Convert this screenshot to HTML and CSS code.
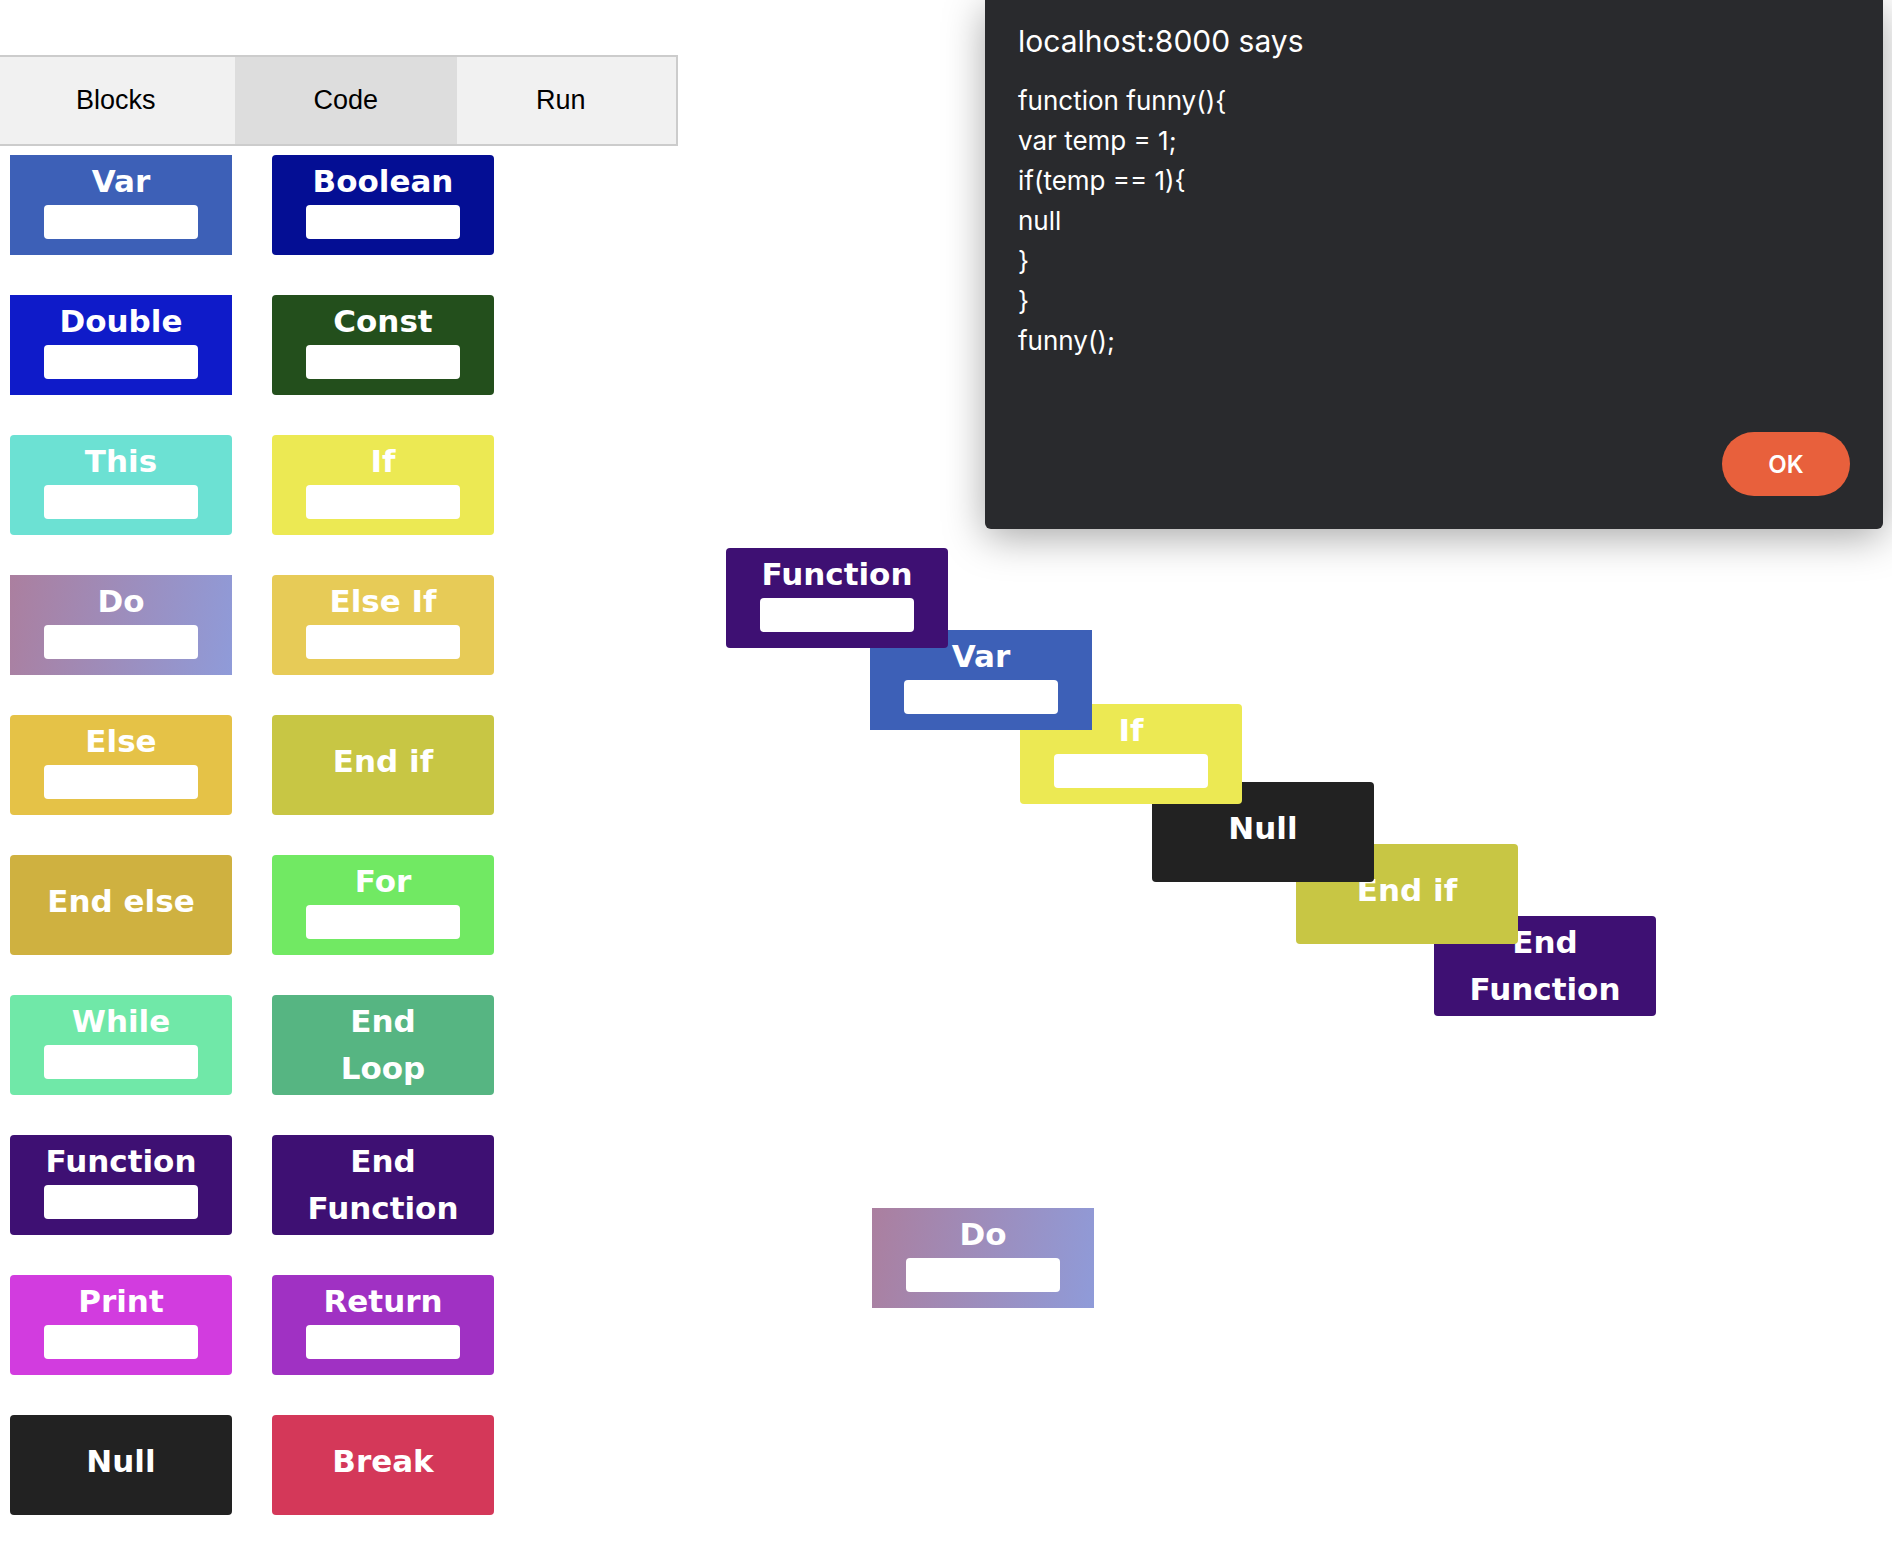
FILE: index.html
```html
<!DOCTYPE html>
<html lang="en">
<head>
<meta charset="utf-8">
<meta name="viewport" content="width=device-width, initial-scale=1">
<title>Block editor</title>
<link rel="stylesheet" href="styles.css">
</head>
<body>
<nav class="tabs">
  <button class="tab" type="button">Blocks</button>
  <button class="tab tab-active" type="button">Code</button>
  <button class="tab" type="button">Run</button>
</nav>

<main class="workspace">
  <section class="palette">
    <label class="block square var"><span class="name">Var</span><input class="value" type="text"></label>
    <label class="block boolean"><span class="name">Boolean</span><input class="value" type="text"></label>
    <label class="block square double"><span class="name">Double</span><input class="value" type="text"></label>
    <label class="block const"><span class="name">Const</span><input class="value" type="text"></label>
    <label class="block this"><span class="name">This</span><input class="value" type="text"></label>
    <label class="block if"><span class="name">If</span><input class="value" type="text"></label>
    <label class="block square do"><span class="name">Do</span><input class="value" type="text"></label>
    <label class="block else-if"><span class="name">Else If</span><input class="value" type="text"></label>
    <label class="block else"><span class="name">Else</span><input class="value" type="text"></label>
    <div class="block plain end-if"><span class="name">End if</span></div>
    <div class="block plain end-else"><span class="name">End else</span></div>
    <label class="block for"><span class="name">For</span><input class="value" type="text"></label>
    <label class="block while"><span class="name">While</span><input class="value" type="text"></label>
    <div class="block end-loop"><span class="name">End<br>Loop</span></div>
    <label class="block function"><span class="name">Function</span><input class="value" type="text"></label>
    <div class="block function"><span class="name">End<br>Function</span></div>
    <label class="block print"><span class="name">Print</span><input class="value" type="text"></label>
    <label class="block return"><span class="name">Return</span><input class="value" type="text"></label>
    <div class="block plain null"><span class="name">Null</span></div>
    <div class="block plain break"><span class="name">Break</span></div>
  </section>

  <!-- Later blocks lie over earlier ones, so the chain runs from its last block to its first -->
  <section class="canvas">
    <div class="block node node-end-function function"><span class="name">End<br>Function</span></div>
    <div class="block plain node node-end-if end-if"><span class="name">End if</span></div>
    <div class="block plain node node-null null"><span class="name">Null</span></div>
    <label class="block node node-if if"><span class="name">If</span><input class="value" type="text"></label>
    <label class="block square node node-var var"><span class="name">Var</span><input class="value" type="text"></label>
    <label class="block node node-function function"><span class="name">Function</span><input class="value" type="text"></label>
    <label class="block square node node-do do"><span class="name">Do</span><input class="value" type="text"></label>
  </section>
</main>

<dialog class="alert" open aria-labelledby="alert-title">
  <h1 class="alert-title" id="alert-title">localhost:8000 says</h1>
  <p class="alert-text">function funny(){
var temp = 1;
if(temp == 1){
null
}
}
funny();</p>
  <button class="alert-ok" type="button">OK</button>
</dialog>
</body>
</html>
```

FILE: styles.css
```css
* {
  box-sizing: border-box;
}

body {
  margin: 0;
  padding-top: 55px;
  background: #fff;
  color: #000;
  font-family: "Liberation Sans", Arial, sans-serif;
}

/* Tab bar */
.tabs {
  display: flex;
  width: fit-content;
  margin-left: -5px;
  padding-right: 11px;
  border: 2px solid #ccc;
  background: #f1f1f1;
}

.tab {
  padding: 28px 79px;
  border: 0;
  background: transparent;
  color: #000;
  font: 27px/31px "Liberation Sans", Arial, sans-serif;
}

.tab-active {
  background: #ddd;
}

/* Workspace */
.workspace {
  display: grid;
  grid-template-columns: auto 1fr;
  padding: 9px 0 0 10px;
}

.palette {
  display: grid;
  grid-template-columns: 222px 222px;
  gap: 40px;
}

.canvas {
  position: relative;
}

/* Blocks */
.block {
  display: flex;
  flex-direction: column;
  align-items: center;
  width: 222px;
  height: 100px;
  padding-top: 3px;
  border-radius: 4px;
  color: #fff;
  font: bold 31px/47px "Comic Sans MS", "DejaVu Sans", sans-serif;
  text-align: center;
}

.square {
  border-radius: 0;
}

.plain {
  justify-content: center;
  padding: 0 0 8px;
}

.value {
  width: 154px;
  height: 34px;
  padding: 0 8px;
  border: 0;
  border-radius: 4px;
  background: #fff;
  font: 20px "Liberation Sans", Arial, sans-serif;
}

.var { background: #3d60b7; }
.boolean { background: #040e94; }
.double { background: #0f1bc9; }
.const { background: #234f1c; }
.this { background: #6ce1d3; }
.if { background: #ece953; }
.do { background: linear-gradient(100deg, #ab7f9f, #8f9bd9); }
.else-if { background: #e7cb57; }
.else { background: #e5c247; }
.end-if { background: #c8c644; }
.end-else { background: #cfb140; }
.for { background: #71e963; }
.while { background: #70e8a8; }
.end-loop { background: #56b582; }
.function { background: #3e1073; }
.print { background: #d23cdf; }
.return { background: #a031c3; }
.null { background: #222; }
.break { background: #d43859; }

/* Blocks dropped on the canvas */
.node { position: absolute; }
.node-function { left: 232px; top: 393px; }
.node-var { left: 376px; top: 475px; }
.node-if { left: 526px; top: 549px; }
.node-null { left: 658px; top: 627px; }
.node-end-if { left: 802px; top: 689px; }
.node-end-function { left: 940px; top: 761px; }
.node-do { left: 378px; top: 1053px; }

/* Alert */
.alert {
  position: absolute;
  inset: 0 9px auto auto;
  display: flex;
  flex-direction: column;
  width: 898px;
  max-width: 90%;
  margin: 0;
  padding: 21px 33px 33px;
  border: 0;
  border-radius: 0 0 6px 6px;
  background: #292a2d;
  box-shadow: 0 8px 40px rgba(0, 0, 0, 0.35);
  color: #fff;
  font-family: Inter, sans-serif;
}

.alert-title {
  margin: 0;
  font-size: 30px;
  font-weight: 400;
  line-height: 40px;
}

.alert-text {
  margin: 20px 0 71px;
  font-size: 26px;
  line-height: 40px;
  white-space: pre-line;
}

.alert-ok {
  align-self: flex-end;
  width: 128px;
  height: 64px;
  border: 0;
  border-radius: 32px;
  background: #e8603c;
  color: #fff;
  font: 600 24px Inter, sans-serif;
}
```
